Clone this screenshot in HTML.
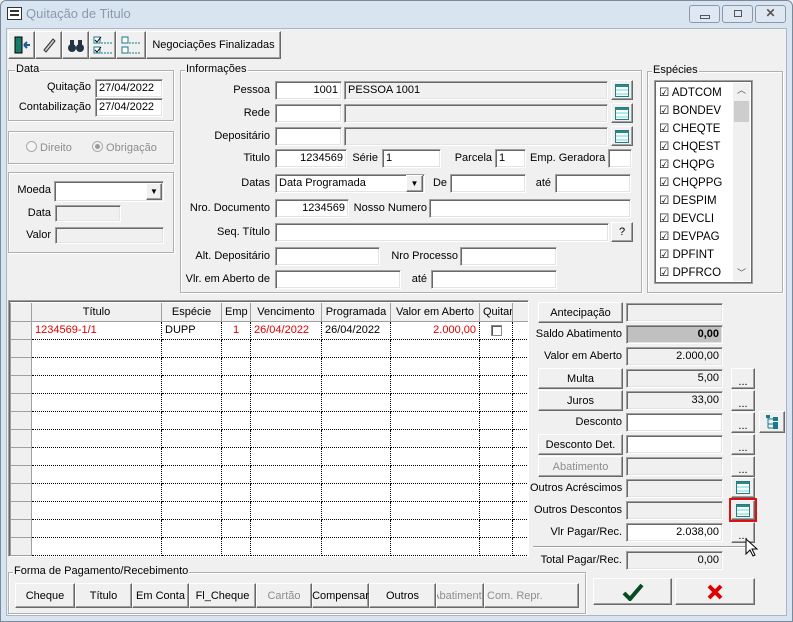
<!DOCTYPE html>
<html><head><meta charset="utf-8"><style>
*{box-sizing:border-box;margin:0;padding:0}
body{width:793px;height:622px;overflow:hidden;background:#f0f0f0;font-family:"Liberation Sans",sans-serif;font-size:11px;color:#000;position:relative}
.a{position:absolute}
.win{left:0;top:0;width:793px;height:622px;border:1px solid #7a8a9a;background:#d8e4f0;border-radius:6px 6px 0 0}
.cl{left:6px;top:28px;width:781px;height:588px;background:#f0f0f0;border:1px solid #a9b6c4}
.in{position:absolute;background:#fff;border:1px solid;border-color:#a0a0a0 #fff #fff #a0a0a0;box-shadow:inset 1px 1px #696969,inset -1px -1px #e3e3e3;padding:2px 3px 0 3px;white-space:nowrap;overflow:hidden;line-height:13px}
.ro{background:#f0f0f0}
.r{text-align:right}
.bt{position:absolute;background:#f0f0f0;border:1px solid;border-color:#fff #696969 #696969 #fff;box-shadow:inset -1px -1px #a0a0a0;text-align:center;white-space:nowrap;display:flex;align-items:center;justify-content:center}
.dis{color:#8d8d8d}
.gb{position:absolute;border:1px solid #b0b0b0;box-shadow:1px 1px #fff,inset 1px 1px #fff}
.gt{position:absolute;top:-8px;left:6px;background:#f0f0f0;padding:0 1px}
.lb{position:absolute;white-space:nowrap;text-align:right}
.li{display:inline-block;width:14px;height:13px;border:1px solid #2a7a7a;background:linear-gradient(#2a8a8a 0 2px,#fff 2px 4px,#aee 4px 6px,#fff 6px 8px,#aee 8px 10px,#fff 10px 12px);vertical-align:middle}
table{border-collapse:collapse}
.gr td{height:18px;border-right:1px dotted #000;border-bottom:1px dotted #000;padding:0 3px;white-space:nowrap;overflow:hidden;line-height:16px}
.gr td:first-child{background:#f0f0f0;border:1px solid #a0a0a0;border-top:none}
.gr tr.h td{background:#f0f0f0;border:1px solid #a0a0a0;border-top:none;text-align:center}
.red{color:#e00000}
.tb{position:absolute;top:5px;width:31px;height:18px;border:1px solid #8a98a8;border-radius:3px;background:#dfe8f2}
</style></head><body>
<div class="a win"></div>
<div class="a" style="left:7px;top:7px;width:15px;height:13px;border:1px solid #333;background:#fff"><div class="a" style="left:2px;top:2px;width:9px;height:2px;background:#333"></div><div class="a" style="left:2px;top:6px;width:9px;height:2px;background:#333"></div></div>
<div class="a" style="left:26px;top:6px;color:#8a9aab;font-size:13px">Quitação de Titulo</div>
<div class="tb" style="left:689px"><div class="a" style="left:10px;top:9px;width:10px;height:4px;border:1px solid #555"></div></div>
<div class="tb" style="left:722px"><div class="a" style="left:11px;top:4px;width:8px;height:7px;border:1px solid #555"></div></div>
<div class="tb" style="left:755px;text-align:center;font-weight:bold;font-size:12px;line-height:15px;color:#555">✕</div>
<div class="a cl"></div>

<!-- toolbar -->
<div class="bt" style="left:8px;top:31px;width:27px;height:28px"><svg width="18" height="18"><rect x="2" y="1" width="7" height="16" fill="#1a7a6a" stroke="#000"/><path d="M17 9H11M11 9l3-3M11 9l3 3" stroke="#1a5a9a" stroke-width="2" fill="none"/></svg></div>
<div class="bt" style="left:35px;top:31px;width:27px;height:28px"><svg width="18" height="18"><path d="M4 14L13 3l2 2L6 16z" fill="#ccc" stroke="#333"/></svg></div>
<div class="bt" style="left:62px;top:31px;width:27px;height:28px"><svg width="18" height="18"><circle cx="5" cy="12" r="4" fill="#234"/><circle cx="13" cy="12" r="4" fill="#234"/><rect x="3" y="4" width="4" height="6" fill="#234"/><rect x="11" y="4" width="4" height="6" fill="#234"/></svg></div>
<div class="bt" style="left:89px;top:31px;width:27px;height:28px"><svg width="22" height="20"><rect x="2" y="2" width="6" height="6" fill="#fff" stroke="#1a7a8a"/><rect x="2" y="12" width="6" height="6" fill="#fff" stroke="#1a7a8a"/><path d="M3 5l2 2 4-5M3 15l2 2 4-5" stroke="#000" fill="none"/><path d="M9 8h12M9 18h12" stroke="#1a7a8a" stroke-dasharray="2 1"/></svg></div>
<div class="bt" style="left:116px;top:31px;width:30px;height:28px"><svg width="22" height="20"><rect x="2" y="2" width="6" height="6" fill="#fff" stroke="#1a7a8a"/><rect x="2" y="12" width="6" height="6" fill="#fff" stroke="#1a7a8a"/><path d="M9 8h12M9 18h12" stroke="#1a7a8a" stroke-dasharray="2 1"/></svg></div>
<div class="bt" style="left:146px;top:31px;width:135px;height:28px">Negociações Finalizadas</div>

<!-- Data -->
<div class="gb" style="left:8px;top:70px;width:166px;height:51px"><span class="gt">Data</span></div>
<div class="lb" style="left:40px;top:81px;width:51px">Quitação</div>
<div class="in" style="left:95px;top:79px;width:68px;height:19px">27/04/2022</div>
<div class="lb" style="left:10px;top:101px;width:81px">Contabilização</div>
<div class="in" style="left:95px;top:98px;width:68px;height:19px">27/04/2022</div>

<div class="gb" style="left:8px;top:131px;width:166px;height:33px"></div>
<div class="a dis" style="left:26px;top:141px"><span style="display:inline-block;width:11px;height:11px;border:1px solid #aaa;border-radius:50%;vertical-align:-1px;background:#f4f4f4"></span> Direito</div>
<div class="a dis" style="left:92px;top:141px"><span style="display:inline-block;width:11px;height:11px;border:1px solid #aaa;border-radius:50%;vertical-align:-1px;background:radial-gradient(#999 0 2px,#f4f4f4 3px)"></span> Obrigação</div>

<div class="gb" style="left:8px;top:172px;width:166px;height:81px"></div>
<div class="lb" style="left:14px;top:184px;width:37px">Moeda</div>
<div class="in" style="left:54px;top:181px;width:110px;height:21px"></div>
<div class="bt" style="left:146px;top:183px;width:16px;height:17px;font-size:8px">▼</div>
<div class="lb" style="left:14px;top:207px;width:37px">Data</div>
<div class="in ro" style="left:55px;top:205px;width:66px;height:17px"></div>
<div class="lb" style="left:14px;top:229px;width:37px">Valor</div>
<div class="in ro" style="left:55px;top:227px;width:109px;height:17px"></div>

<!-- Informações -->
<div class="gb" style="left:180px;top:70px;width:462px;height:223px"><span class="gt" style="left:4px">Informações</span></div>
<div class="lb" style="left:190px;top:84px;width:80px">Pessoa</div>
<div class="in r" style="left:275px;top:81px;width:67px;height:19px">1001</div>
<div class="in ro" style="left:344px;top:81px;width:264px;height:19px">PESSOA 1001</div>
<div class="bt" style="left:611px;top:80px;width:22px;height:20px"><span class="li"></span></div>
<div class="lb" style="left:190px;top:107px;width:80px">Rede</div>
<div class="in" style="left:275px;top:104px;width:67px;height:19px"></div>
<div class="in ro" style="left:344px;top:104px;width:264px;height:19px"></div>
<div class="bt" style="left:611px;top:103px;width:22px;height:20px"><span class="li"></span></div>
<div class="lb" style="left:190px;top:130px;width:80px">Depositário</div>
<div class="in" style="left:275px;top:127px;width:67px;height:19px"></div>
<div class="in ro" style="left:344px;top:127px;width:264px;height:19px"></div>
<div class="bt" style="left:611px;top:126px;width:22px;height:20px"><span class="li"></span></div>
<div class="lb" style="left:190px;top:152px;width:80px">Titulo</div>
<div class="in r" style="left:275px;top:149px;width:72px;height:19px">1234569</div>
<div class="lb" style="left:350px;top:152px;width:28px">Série</div>
<div class="in" style="left:382px;top:149px;width:59px;height:19px">1</div>
<div class="lb" style="left:450px;top:152px;width:42px">Parcela</div>
<div class="in" style="left:495px;top:149px;width:31px;height:19px">1</div>
<div class="lb" style="left:530px;top:152px;width:75px">Emp. Geradora</div>
<div class="in" style="left:608px;top:149px;width:24px;height:19px"></div>
<div class="lb" style="left:190px;top:177px;width:80px">Datas</div>
<div class="in" style="left:275px;top:174px;width:150px;height:19px">Data Programada</div>
<div class="bt" style="left:406px;top:175px;width:17px;height:17px;font-size:8px">▼</div>
<div class="lb" style="left:425px;top:177px;width:22px">De</div>
<div class="in" style="left:450px;top:174px;width:76px;height:19px"></div>
<div class="lb" style="left:530px;top:177px;width:21px">até</div>
<div class="in" style="left:555px;top:174px;width:76px;height:19px"></div>
<div class="lb" style="left:180px;top:202px;width:90px">Nro. Documento</div>
<div class="in r" style="left:275px;top:199px;width:74px;height:19px">1234569</div>
<div class="lb" style="left:352px;top:202px;width:75px">Nosso Numero</div>
<div class="in" style="left:429px;top:199px;width:202px;height:19px"></div>
<div class="lb" style="left:190px;top:226px;width:80px">Seq. Título</div>
<div class="in" style="left:275px;top:223px;width:334px;height:19px"></div>
<div class="bt" style="left:611px;top:222px;width:22px;height:20px">?</div>
<div class="lb" style="left:180px;top:250px;width:90px">Alt. Depositário</div>
<div class="in" style="left:275px;top:247px;width:105px;height:19px"></div>
<div class="lb" style="left:385px;top:250px;width:73px">Nro Processo</div>
<div class="in" style="left:460px;top:247px;width:97px;height:19px"></div>
<div class="lb" style="left:180px;top:273px;width:90px">Vlr. em Aberto de</div>
<div class="in" style="left:275px;top:270px;width:126px;height:19px"></div>
<div class="lb" style="left:405px;top:273px;width:22px">até</div>
<div class="in" style="left:431px;top:270px;width:126px;height:19px"></div>

<!-- Espécies -->
<div class="gb" style="left:647px;top:71px;width:136px;height:222px"><span class="gt" style="left:4px">Espécies</span></div>
<div class="in" style="left:654px;top:80px;width:99px;height:204px;padding:0;border-color:#a0a0a0;box-shadow:inset 1px 1px #696969,inset -1px -1px #696969">
<div class="a" style="left:78px;top:2px;width:17px;height:198px;background:#f0f0f0"></div>
<div class="a" style="left:79px;top:20px;width:15px;height:21px;background:#cdcdcd"></div>
<div class="a" style="left:82px;top:3px;font-size:9px;color:#555">︿</div>
<div class="a" style="left:82px;top:186px;font-size:9px;color:#555">﹀</div>
</div>
<div class="a" style="left:659px;top:84px;line-height:18px;font-size:11.5px">
<div>☑ ADTCOM</div><div>☑ BONDEV</div><div>☑ CHEQTE</div><div>☑ CHQEST</div><div>☑ CHQPG</div><div>☑ CHQPPG</div><div>☑ DESPIM</div><div>☑ DEVCLI</div><div>☑ DEVPAG</div><div>☑ DPFINT</div><div>☑ DPFRCO</div>
</div>

<!-- Grid -->
<div class="a" style="left:8px;top:300px;width:521px;height:257px;background:#fff;border:1px solid;border-color:#a0a0a0 #fff #fff #a0a0a0;box-shadow:inset 1px 1px #696969;overflow:hidden">
<table class="gr a" style="left:1px;top:2px;table-layout:fixed;width:520px">
<colgroup><col style="width:21px"><col style="width:130px"><col style="width:60px"><col style="width:29px"><col style="width:71px"><col style="width:69px"><col style="width:89px"><col style="width:33px"><col style="width:18px"></colgroup>
<tr class="h"><td></td><td>Título</td><td>Espécie</td><td>Emp</td><td>Vencimento</td><td>Programada</td><td>Valor em Aberto</td><td>Quitar</td><td></td></tr>
<tr><td></td><td class="red">1234569-1/1</td><td>DUPP</td><td class="red" style="text-align:center">1</td><td class="red">26/04/2022</td><td>26/04/2022</td><td class="red" style="text-align:right">2.000,00</td><td style="text-align:center"><span style="display:inline-block;width:11px;height:11px;border:1px solid #888;box-shadow:inset 1px 1px #555;vertical-align:middle"></span></td><td></td></tr>
<tr><td></td><td></td><td></td><td></td><td></td><td></td><td></td><td></td><td></td></tr>
<tr><td></td><td></td><td></td><td></td><td></td><td></td><td></td><td></td><td></td></tr>
<tr><td></td><td></td><td></td><td></td><td></td><td></td><td></td><td></td><td></td></tr>
<tr><td></td><td></td><td></td><td></td><td></td><td></td><td></td><td></td><td></td></tr>
<tr><td></td><td></td><td></td><td></td><td></td><td></td><td></td><td></td><td></td></tr>
<tr><td></td><td></td><td></td><td></td><td></td><td></td><td></td><td></td><td></td></tr>
<tr><td></td><td></td><td></td><td></td><td></td><td></td><td></td><td></td><td></td></tr>
<tr><td></td><td></td><td></td><td></td><td></td><td></td><td></td><td></td><td></td></tr>
<tr><td></td><td></td><td></td><td></td><td></td><td></td><td></td><td></td><td></td></tr>
<tr><td></td><td></td><td></td><td></td><td></td><td></td><td></td><td></td><td></td></tr>
<tr><td></td><td></td><td></td><td></td><td></td><td></td><td></td><td></td><td></td></tr>
<tr><td></td><td></td><td></td><td></td><td></td><td></td><td></td><td></td><td></td></tr>
</table>
</div>

<!-- Right panel -->
<div class="bt" style="left:538px;top:302px;width:85px;height:21px">Antecipação</div>
<div class="in ro" style="left:626px;top:303px;width:97px;height:19px"></div>
<div class="lb" style="left:530px;top:328px;width:92px">Saldo Abatimento</div>
<div class="in r" style="left:626px;top:325px;width:97px;height:19px;background:#c0c0c0;font-weight:bold">0,00</div>
<div class="lb" style="left:530px;top:350px;width:92px">Valor em Aberto</div>
<div class="in ro r" style="left:626px;top:347px;width:97px;height:19px">2.000,00</div>
<div class="bt" style="left:538px;top:368px;width:85px;height:21px">Multa</div>
<div class="in ro r" style="left:626px;top:369px;width:97px;height:19px">5,00</div>
<div class="bt" style="left:731px;top:368px;width:24px;height:21px;align-items:flex-end">...</div>
<div class="bt" style="left:538px;top:390px;width:85px;height:21px">Juros</div>
<div class="in ro r" style="left:626px;top:391px;width:97px;height:19px">33,00</div>
<div class="bt" style="left:731px;top:390px;width:24px;height:21px;align-items:flex-end">...</div>
<div class="lb" style="left:530px;top:416px;width:92px">Desconto</div>
<div class="in" style="left:626px;top:413px;width:97px;height:19px"></div>
<div class="bt" style="left:731px;top:412px;width:24px;height:21px;align-items:flex-end">...</div>
<div class="bt" style="left:759px;top:411px;width:26px;height:22px"><svg width="14" height="16"><path d="M3 2v12M3 5h5M3 10h5M3 14h5" stroke="#1a7a8a" fill="none"/><rect x="1" y="1" width="4" height="3" fill="#1a7a8a"/><rect x="8" y="3" width="5" height="4" fill="#1a7a8a"/><rect x="8" y="8" width="5" height="4" fill="#1a7a8a"/><rect x="8" y="12" width="5" height="3" fill="#1a7a8a"/></svg></div>
<div class="bt" style="left:538px;top:434px;width:85px;height:21px">Desconto Det.</div>
<div class="in" style="left:626px;top:435px;width:97px;height:19px"></div>
<div class="bt" style="left:731px;top:434px;width:24px;height:21px;align-items:flex-end">...</div>
<div class="bt dis" style="left:538px;top:456px;width:85px;height:21px">Abatimento</div>
<div class="in ro" style="left:626px;top:457px;width:97px;height:19px"></div>
<div class="bt" style="left:731px;top:456px;width:24px;height:21px;align-items:flex-end">...</div>
<div class="lb" style="left:530px;top:482px;width:92px">Outros Acréscimos</div>
<div class="in ro" style="left:626px;top:479px;width:97px;height:19px"></div>
<div class="bt" style="left:731px;top:477px;width:24px;height:21px"><span class="li"></span></div>
<div class="lb" style="left:530px;top:504px;width:92px">Outros Descontos</div>
<div class="in ro" style="left:626px;top:501px;width:97px;height:19px"></div>
<div class="bt" style="left:731px;top:500px;width:24px;height:20px"><span class="li"></span></div>
<div class="a" style="left:729px;top:498px;width:28px;height:24px;border:2px solid #e01010"></div>
<div class="lb" style="left:530px;top:526px;width:92px">Vlr Pagar/Rec.</div>
<div class="in r" style="left:626px;top:523px;width:97px;height:19px">2.038,00</div>
<div class="bt" style="left:731px;top:522px;width:24px;height:21px;align-items:flex-end">...</div>
<div class="a" style="left:533px;top:546px;width:218px;height:2px;border-top:1px solid #a0a0a0;border-bottom:1px solid #fff"></div>
<svg class="a" style="left:745px;top:538px" width="14" height="20"><path d="M1 1v15l4-4 3 6 2-1-3-6h5z" fill="#fff" stroke="#000"/></svg>
<div class="lb" style="left:530px;top:554px;width:92px">Total Pagar/Rec.</div>
<div class="in ro r" style="left:626px;top:551px;width:97px;height:19px">0,00</div>

<!-- Forma de Pagamento -->
<div class="gb" style="left:8px;top:572px;width:578px;height:42px"><span class="gt" style="left:4px">Forma de Pagamento/Recebimento</span></div>
<div class="bt" style="left:15px;top:583px;width:60px;height:25px">Cheque</div>
<div class="bt" style="left:75px;top:583px;width:57px;height:25px">Título</div>
<div class="bt" style="left:132px;top:583px;width:57px;height:25px">Em Conta</div>
<div class="bt" style="left:189px;top:583px;width:67px;height:25px">Fl_Cheque</div>
<div class="bt dis" style="left:256px;top:583px;width:56px;height:25px">Cartão</div>
<div class="bt" style="left:312px;top:583px;width:57px;height:25px">Compensar</div>
<div class="bt" style="left:369px;top:583px;width:67px;height:25px">Outros</div>
<div class="bt dis" style="left:436px;top:583px;width:48px;height:25px;overflow:hidden">Abatimento</div>
<div class="bt dis" style="left:484px;top:583px;width:95px;height:25px;justify-content:flex-start;padding-left:2px">Com. Repr.</div>
<div class="bt" style="left:593px;top:578px;width:79px;height:27px"><svg width="22" height="18"><path d="M2 10l6 6L20 2" stroke="#0a4a20" stroke-width="4" fill="none"/></svg></div>
<div class="bt" style="left:675px;top:578px;width:80px;height:27px"><svg width="18" height="18"><path d="M3 3l12 12M15 3L3 15" stroke="#e00000" stroke-width="4"/></svg></div>
</body></html>
